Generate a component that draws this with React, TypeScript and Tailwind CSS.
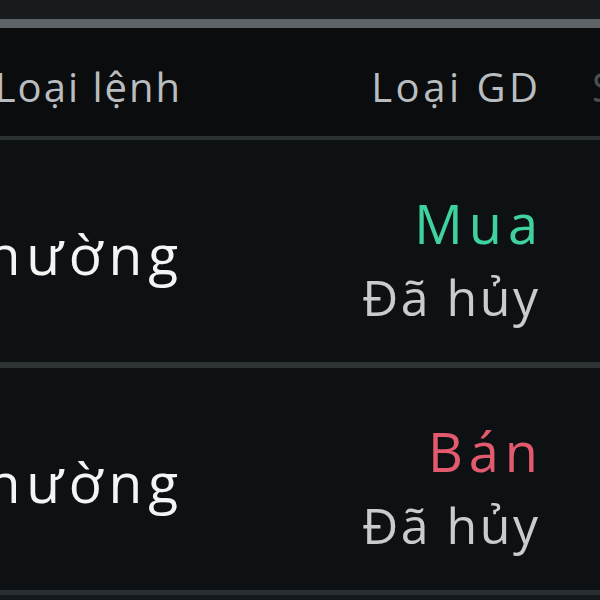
import React from "react";

const font = { fontFamily: "'Open Sans', 'Noto Sans', sans-serif" };

function Row({ kind, color }: { kind: string; color: string }) {
  return (
    <div className="flex h-[222px] bg-[#0e1113]">
      <div className="flex w-[178px] shrink-0 items-center justify-end pt-[4px]">
        <span className="-mr-[6px] whitespace-nowrap text-[55px] leading-none tracking-[6px] text-[#f3f4f4]">Thường</span>
      </div>
      <div className="flex w-[360px] shrink-0 flex-col items-end justify-center gap-[22px] pt-[16px]">
        <span className={`-mr-[6px] whitespace-nowrap text-[54px] leading-none tracking-[6px] ${color}`}>{kind}</span>
        <span className="-mr-[2.5px] whitespace-nowrap text-[50px] leading-none tracking-[2.5px] text-[#c9cccd]">Đã hủy</span>
      </div>
      <div className="pl-[54px]" />
    </div>
  );
}

export default function App() {
  return (
    <div className="h-[600px] w-[600px] overflow-hidden bg-[#15191c]" style={font}>
      <div className="h-[19px] bg-[#171b1e]" />
      <div className="h-[9px] bg-[#5d6367]" />
      <div className="flex h-[108px] items-center bg-[#0a0c0e] pt-[10px]">
        <div className="flex w-[180px] shrink-0 justify-end">
          <span className="-mr-[2px] whitespace-nowrap text-[40px] leading-none tracking-[2px] text-[#b9bdbf]">Loại lệnh</span>
        </div>
        <div className="flex w-[358px] shrink-0 justify-end">
          <span className="-mr-[3.5px] whitespace-nowrap text-[40px] leading-none tracking-[3.5px] text-[#b9bdbf]">Loại GD</span>
        </div>
        <div className="pl-[54px]">
          <span className="whitespace-nowrap text-[40px] leading-none text-[#4a4f52]">Số</span>
        </div>
      </div>
      <div className="h-[4px] bg-[#2b3033]" />
      <Row kind="Mua" color="text-[#3fd29f]" />
      <div className="h-[6px] bg-[#2d3235]" />
      <Row kind="Bán" color="text-[#e35a6e]" />
      <div className="h-[5px] bg-[#2a2f33]" />
    </div>
  );
}
